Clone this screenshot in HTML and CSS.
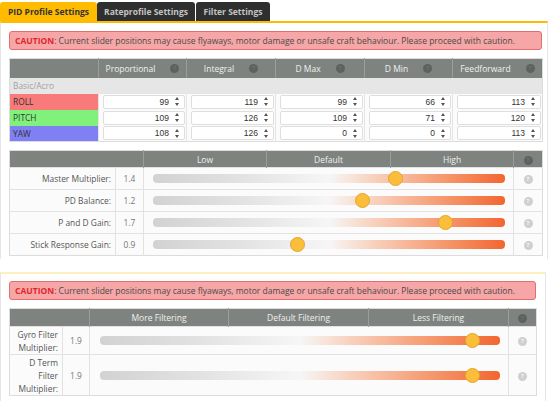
FILE: index.html
```html
<!DOCTYPE html>
<html>
<head>
<meta charset="utf-8">
<link rel="stylesheet" href="styles.css">
</head>
<body>
<div class="page">
  <div class="tabs">
    <div class="tab tab-pid active">PID Profile Settings</div>
    <div class="tab tab-rate">Rateprofile Settings</div>
    <div class="tab tab-filter">Filter Settings</div>
  </div>

  <div class="panel panel-pid">
    <div class="caution"><b>CAUTION</b>: Current slider positions may cause flyaways, motor damage or unsafe craft behaviour. Please proceed with caution.</div>

    <table class="pid">
      <colgroup><col class="c-name"><col class="c-p"><col class="c-i"><col class="c-dmax"><col class="c-dmin"><col class="c-ff"></colgroup>
      <tr class="head">
        <th></th>
        <th><span class="hcell">Proportional<i class="help dark"></i></span></th>
        <th><span class="hcell">Integral<i class="help dark"></i></span></th>
        <th><span class="hcell">D Max<i class="help dark"></i></span></th>
        <th><span class="hcell">D Min<i class="help dark"></i></span></th>
        <th><span class="hcell">Feedforward<i class="help dark"></i></span></th>
      </tr>
      <tr class="group"><td colspan="6">Basic/Acro</td></tr>
      <tr class="axis">
        <td class="name roll">ROLL</td>
        <td><span class="num">99<i class="spin"></i></span></td>
        <td><span class="num">119<i class="spin"></i></span></td>
        <td><span class="num">99<i class="spin"></i></span></td>
        <td><span class="num">66<i class="spin"></i></span></td>
        <td><span class="num">113<i class="spin"></i></span></td>
      </tr>
      <tr class="axis">
        <td class="name pitch">PITCH</td>
        <td><span class="num">109<i class="spin"></i></span></td>
        <td><span class="num">126<i class="spin"></i></span></td>
        <td><span class="num">109<i class="spin"></i></span></td>
        <td><span class="num">71<i class="spin"></i></span></td>
        <td><span class="num">120<i class="spin"></i></span></td>
      </tr>
      <tr class="axis">
        <td class="name yaw">YAW</td>
        <td><span class="num">108<i class="spin"></i></span></td>
        <td><span class="num">126<i class="spin"></i></span></td>
        <td><span class="num">0<i class="spin"></i></span></td>
        <td><span class="num">0<i class="spin"></i></span></td>
        <td><span class="num">113<i class="spin"></i></span></td>
      </tr>
    </table>

    <table class="sliders tuning">
      <colgroup><col class="s-label"><col class="s-val"><col class="s-low"><col class="s-def"><col class="s-high"><col class="s-help"></colgroup>
      <tr class="head">
        <th colspan="2"></th>
        <th>Low</th>
        <th>Default</th>
        <th>High</th>
        <th><i class="help dark"></i></th>
      </tr>
      <tr>
        <td class="label">Master Multiplier:</td>
        <td class="val">1.4</td>
        <td colspan="3" class="slot"><div class="track"><span class="thumb" style="left:69%"></span></div></td>
        <td class="hc"><i class="help"></i></td>
      </tr>
      <tr>
        <td class="label">PD Balance:</td>
        <td class="val">1.2</td>
        <td colspan="3" class="slot"><div class="track"><span class="thumb" style="left:59.5%"></span></div></td>
        <td class="hc"><i class="help"></i></td>
      </tr>
      <tr>
        <td class="label">P and D Gain:</td>
        <td class="val">1.7</td>
        <td colspan="3" class="slot"><div class="track"><span class="thumb" style="left:83%"></span></div></td>
        <td class="hc"><i class="help"></i></td>
      </tr>
      <tr>
        <td class="label">Stick Response Gain:</td>
        <td class="val">0.9</td>
        <td colspan="3" class="slot"><div class="track"><span class="thumb" style="left:41%"></span></div></td>
        <td class="hc"><i class="help"></i></td>
      </tr>
    </table>
  </div>

  <div class="panel panel-filter">
    <div class="caution"><b>CAUTION</b>: Current slider positions may cause flyaways, motor damage or unsafe craft behaviour. Please proceed with caution.</div>

    <table class="sliders filters">
      <colgroup><col class="f-label"><col class="f-val"><col class="f-more"><col class="f-def"><col class="f-less"><col class="f-help"></colgroup>
      <tr class="head">
        <th colspan="2"></th>
        <th>More Filtering</th>
        <th>Default Filtering</th>
        <th>Less Filtering</th>
        <th><i class="help dark"></i></th>
      </tr>
      <tr class="r-gyro">
        <td class="label">Gyro Filter Multiplier:</td>
        <td class="val">1.9</td>
        <td colspan="3" class="slot"><div class="track"><span class="thumb" style="left:93%"></span></div></td>
        <td class="hc"><i class="help"></i></td>
      </tr>
      <tr class="r-dterm">
        <td class="label">D Term Filter Multiplier:</td>
        <td class="val">1.9</td>
        <td colspan="3" class="slot"><div class="track"><span class="thumb" style="left:93%"></span></div></td>
        <td class="hc"><i class="help"></i></td>
      </tr>
    </table>
  </div>
</div>
</body>
</html>
```

FILE: styles.css
```css
* { box-sizing: border-box; }

html, body {
  margin: 0;
  padding: 0;
  background: #ffffff;
}

body {
  font-family: "Open Sans", "DejaVu Sans", sans-serif;
  font-size: 8.4px;
  color: #555;
  width: 550px;
  height: 401px;
  overflow: hidden;
}

.page {
  width: 550px;
}

/* ---------- tabs ---------- */
.tabs {
  display: flex;
  height: 21px;
  padding-top: 2px;
}

.tab {
  height: 19px;
  line-height: 19px;
  font-weight: 700;
  font-size: 8.5px;
  text-align: center;
  border-radius: 3px 3px 0 0;
  background: #2f2f2f;
  color: #c4c4c4;
  white-space: nowrap;
}

.tab-pid { width: 97px; }
.tab-rate { width: 98px; margin-right: 1px; }
.tab-filter { width: 74px; }

.tab.active {
  background: #ffbb00;
  color: #333;
}

/* ---------- panels ---------- */
.panel {
  border-left: 1px solid #e6e6e6;
  border-right: 1px solid #e6e6e6;
}

.panel-pid {
  width: 548px;
  border-top: 2px solid #ffbb00;
  padding: 8px 5px 3px 8px;
  margin-right: 2px;
}

.panel-filter {
  width: 546px;
  margin-top: 13px;
  border-top: 2px solid #fcefc2;
  padding: 7px 9px 0 8px;
  height: 140px;
}

.caution {
  height: 19px;
  line-height: 17px;
  padding-left: 5px;
  background: #f6a6a6;
  border: 1px solid #e46d6d;
  border-radius: 3px;
  color: #4a4a4a;
  white-space: nowrap;
  font-size: 8.5px;
}

.caution b {
  color: #e1262e;
  font-weight: 700;
}

/* ---------- shared table bits ---------- */
table {
  border-collapse: collapse;
  table-layout: fixed;
  margin-top: 8px;
  background: #fbfbfb;
}

.head th {
  background: #7e8380;
  color: #eef0ee;
  font-weight: 400;
  font-size: 8.5px;
  padding: 0;
  border-left: 1px solid #9a9e9b;
  text-align: center;
}

.head th:first-child { border-left: none; }

.help {
  display: inline-block;
  width: 9px;
  height: 9px;
  border-radius: 50%;
  background: #cfcfcf;
  position: relative;
  vertical-align: middle;
}

.help::after {
  content: "?";
  position: absolute;
  left: 0;
  top: 0;
  width: 9px;
  line-height: 9px;
  font-size: 6px;
  font-weight: 700;
  text-align: center;
  color: #f4f4f4;
  font-style: normal;
}

.help.dark { background: #5d625f; }
.help.dark::after { color: #6e7370; }

/* ---------- PID table ---------- */
.pid {
  width: 533px;
  border: 1px solid #dcdcdc;
}

.c-name { width: 89px; }
.c-p { width: 88px; }
.c-i { width: 89px; }
.c-dmax { width: 89px; }
.c-dmin { width: 88px; }
.c-ff { width: 90px; }

.pid .head th { height: 19px; }

.hcell {
  display: inline-flex;
  align-items: center;
  gap: 15px;
}

.pid .group td {
  height: 16px;
  background: #e6e6e6;
  color: #a2a2a2;
  padding-left: 3px;
}

.pid .axis td {
  height: 16px;
  padding: 0 1px 0 4px;
  border-left: 1px solid #e4e4e4;
}

.pid .axis td.name {
  padding-left: 3px;
  border-left: none;
  color: #333;
}

.name.roll { background: #f97a7a; color: #c33b3b; }
.name.pitch { background: #80f27c; color: #2f8f35; }
.name.yaw { background: #7f80f4; color: #cfd0ff; }

.num {
  display: flex;
  align-items: center;
  justify-content: flex-end;
  height: 14px;
  padding-right: 4px;
  background: #fff;
  border: 1px solid #dedede;
  border-radius: 2px;
  font-family: "Liberation Sans", Arial, sans-serif;
  font-size: 8.5px;
  color: #333;
}

.spin {
  position: relative;
  display: inline-block;
  width: 5px;
  height: 9px;
  margin-left: 6px;
}

.spin::before,
.spin::after {
  content: "";
  position: absolute;
  left: 0;
  border-left: 2.5px solid transparent;
  border-right: 2.5px solid transparent;
}

.spin::before { top: 0; border-bottom: 3px solid #555; }
.spin::after { top: 6px; border-top: 3px solid #555; }

/* ---------- slider tables ---------- */
.sliders {
  border: 1px solid #dcdcdc;
}

.sliders td {
  border-top: 1px solid #e2e2e2;
  padding: 0;
}

.sliders .label {
  text-align: right;
  padding-right: 4px;
  color: #555;
  border-right: 1px solid #e2e2e2;
}

.sliders .val {
  text-align: center;
  color: #777;
  border-right: 1px solid #e2e2e2;
}

.sliders .hc {
  text-align: center;
  border-left: 1px solid #e2e2e2;
}

.track {
  position: relative;
  height: 9px;
  border-radius: 4px;
  background: linear-gradient(90deg, #d2d2d2 0%, #e2e2e2 25%, #f6f6f6 50%, #f8d3c0 62%, #f69a70 82%, #f26630 100%);
}

.thumb {
  position: absolute;
  top: 50%;
  width: 15px;
  height: 15px;
  margin: -7.5px 0 0 -7.5px;
  border-radius: 50%;
  background: #fbbe3a;
  border: 1px solid #e2a62e;
}

/* tuning sliders */
.tuning { width: 533px; }
.s-label { width: 106px; }
.s-val { width: 28px; }
.s-low { width: 123px; }
.s-def { width: 124px; }
.s-high { width: 123px; }
.s-help { width: 29px; }

.tuning .head th { height: 17px; }
.tuning td { height: 22px; }
.tuning .slot { padding: 0 8px 0 9px; }

/* filter sliders */
.filters { width: 527px; }
.f-label { width: 53px; }
.f-val { width: 27px; }
.f-more { width: 139px; }
.f-def { width: 140px; }
.f-less { width: 140px; }
.f-help { width: 28px; }

.filters .head th { height: 18px; }
.filters .label { line-height: 13px; padding: 0 4px 0 4px; }
.r-gyro td { height: 28px; }
.r-dterm td { height: 41px; }
.filters .slot { padding: 0 8px 0 10px; }
```
